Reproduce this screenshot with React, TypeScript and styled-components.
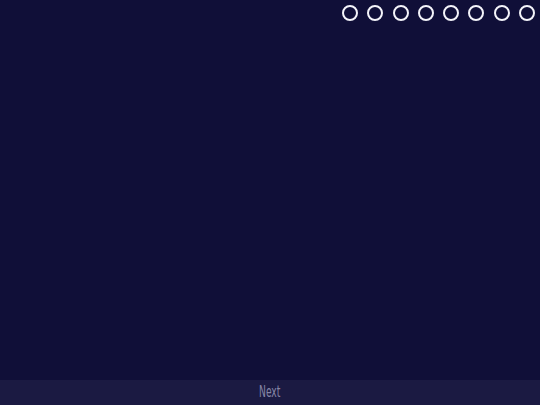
import React from "react";
import styled, { createGlobalStyle } from "styled-components";

const Global = createGlobalStyle`
  html, body { margin: 0; padding: 0; }
  body { background: #100f38; font-family: "Liberation Sans", Arial, sans-serif; }
  #root { height: 100vh; }
`;

const Page = styled.div`
  height: 405px;
  width: 540px;
  display: flex;
  flex-direction: column;
  background: #100f38;
  overflow: hidden;
`;

const Top = styled.div`
  display: flex;
  justify-content: flex-end;
  gap: 9.3px;
  padding: 5px 5px 0 0;
`;

const Dot = styled.div`
  width: 16px;
  height: 16px;
  box-sizing: border-box;
  border: 2px solid #f4f4fa;
  border-radius: 50%;
`;

const Stage = styled.div`
  flex: 1;
`;

const Footer = styled.div`
  height: 25px;
  background: #1b1a42;
  display: flex;
  align-items: center;
  justify-content: center;
`;

const NextLabel = styled.span`
  font-family: "DejaVu Sans Condensed", "DejaVu Sans", sans-serif;
  font-size: 15px;
  line-height: 1;
  color: #8685a6;
  display: inline-block;
  transform: scaleX(0.68);
  margin-top: -1px;
`;

export default function App() {
  return (
    <Page>
      <Global />
      <Top>
        {Array.from({ length: 8 }).map((_, i) => (
          <Dot key={i} />
        ))}
      </Top>
      <Stage />
      <Footer>
        <NextLabel>Next</NextLabel>
      </Footer>
    </Page>
  );
}
